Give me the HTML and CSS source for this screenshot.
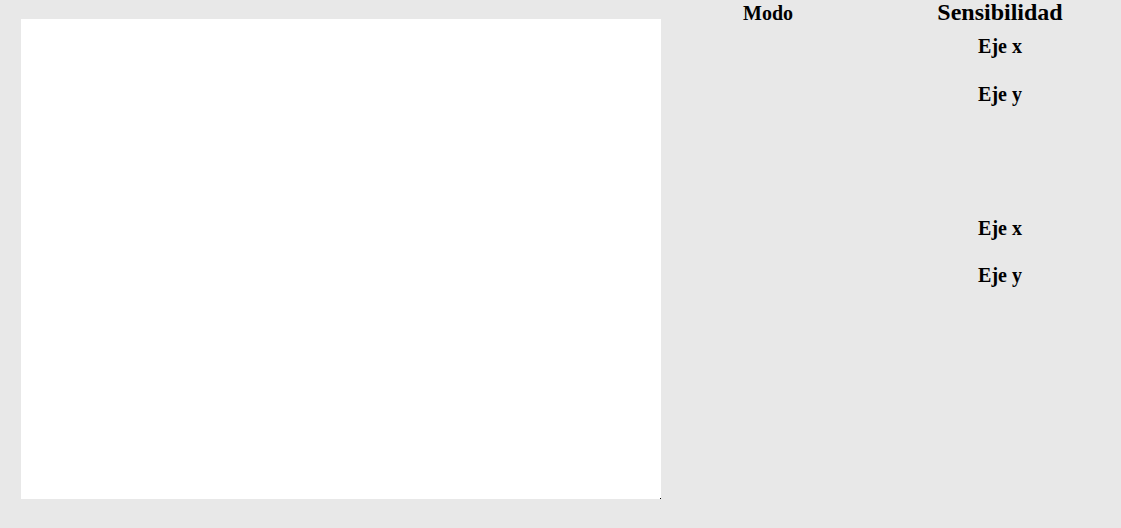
FILE: index.html
```html
<!DOCTYPE html>
<html lang="es">
<head>
<meta charset="utf-8">
<title>Controles</title>
<link rel="stylesheet" href="styles.css">
</head>
<body>
<div class="page">
  <div class="canvas"><span class="corner-dot"></span></div>
  <div class="panel">
    <div class="col col-modo">
      <div class="heading-modo">Modo</div>
    </div>
    <div class="col col-sens">
      <div class="heading-sens">Sensibilidad</div>
      <div class="group group-1">
        <div class="label label-x">Eje x</div>
        <div class="label label-y">Eje y</div>
      </div>
      <div class="group group-2">
        <div class="label label-x">Eje x</div>
        <div class="label label-y2">Eje y</div>
      </div>
    </div>
  </div>
</div>
</body>
</html>
```
FILE: styles.css
```css
html, body {
  margin: 0;
  padding: 0;
  background: #e8e8e8;
  height: 100%;
  overflow: hidden;
}

body {
  font-family: "Liberation Serif", "Times New Roman", serif;
  color: #000;
}

.page {
  display: flex;
  align-items: flex-start;
}

.canvas {
  position: relative;
  flex: 0 0 auto;
  width: 640px;
  height: 480px;
  margin: 19px 0 0 21px;
  background: #ffffff;
}

.corner-dot {
  position: absolute;
  right: 0;
  bottom: 0;
  width: 1px;
  height: 1px;
  background: #000;
}

.panel {
  display: flex;
  gap: 32px;
  padding-left: 7px;
}

.col {
  width: 200px;
  display: flex;
  flex-direction: column;
  align-items: center;
  text-align: center;
}

.heading-modo {
  font-size: 20px;
  font-weight: bold;
  line-height: 24px;
  padding-top: 1px;
}

.heading-sens {
  font-size: 24px;
  font-weight: bold;
  line-height: 24px;
}

.group {
  display: flex;
  flex-direction: column;
  align-items: center;
}

.group-1 {
  margin-top: 10px;
  gap: 24px;
}

.group-2 {
  margin-top: 110px;
  gap: 22px;
}

.label {
  font-size: 20px;
  font-weight: bold;
  line-height: 24px;
}

.label-y2 {
  font-size: 20px;
  font-weight: bold;
  line-height: 24px;
  margin-top: 1px;
}
```
